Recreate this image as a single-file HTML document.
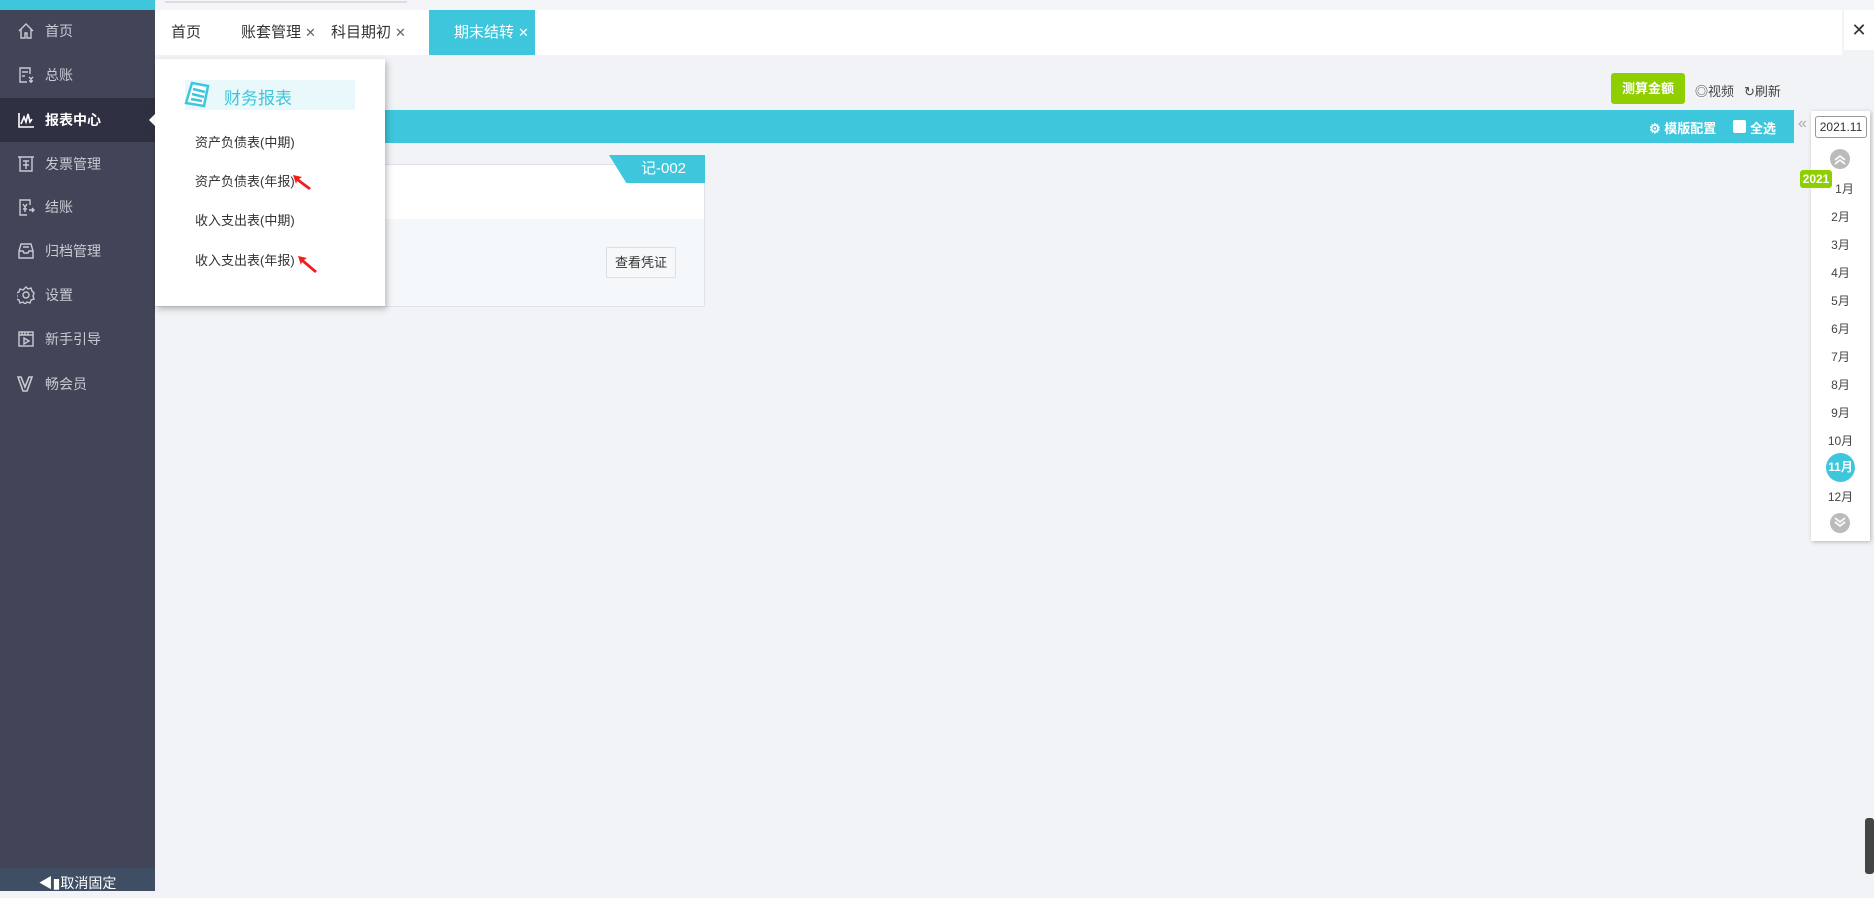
<!DOCTYPE html>
<html><head><meta charset="utf-8"><style>
*{margin:0;padding:0;box-sizing:border-box}
body{width:1874px;height:891px;overflow:hidden;background:#f1f3f6;font-family:"Liberation Sans","Noto Sans CJK SC",sans-serif;position:relative}
.abs{position:absolute}
#side{left:0;top:0;width:155px;height:891px;background:#424457}
#side .hd{height:10px;background:#3ec6dc}
.it{position:absolute;left:0;width:155px;height:44px;color:#c9cad3;font-size:14px;line-height:44px;padding-left:45px}
.it svg{position:absolute;left:17px;top:13px}
.it.on{background:#2f3143;color:#fff;font-weight:bold}
.tab{position:absolute;top:10px;height:45px;line-height:45px;font-size:15px;color:#333}
.x{font-size:13px;color:#666;margin-left:4px}
.mon{position:absolute;left:1811px;width:59px;text-align:center;font-size:12px;color:#444}
.pi{position:absolute;left:195px;font-size:13px;color:#333}
</style></head><body>
<div class="abs" style="left:155px;top:0;width:1719px;height:10px;background:#f3f5f8"></div>
<div class="abs" style="left:165px;top:1px;width:242px;height:2px;background:#ddd"></div>
<div id="side" class="abs"><div class="hd"></div>
<div class="it" style="top:9px"><svg width="18" height="18" viewBox="0 0 18 18" fill="none" stroke="#c9cad3" stroke-width="1.4"><path d="M2 9L9 2l7 7M4 7v9h4v-5h2v5h4V7"/></svg>首页</div>
<div class="it" style="top:53px"><svg width="18" height="18" viewBox="0 0 18 18" fill="none" stroke="#c9cad3" stroke-width="1.4"><path d="M13 8V2H3v14h7M5 6h6M5 10h3M12 11l2 2 2-2M14 13v4M12 15h4"/></svg>总账</div>
<div class="it on" style="top:98px"><svg width="18" height="18" viewBox="0 0 18 18" fill="none" stroke="#fff" stroke-width="1.6"><path d="M2 2v14h15M4 13l3-7 2 5 2-8 2 8 2-3"/></svg>报表中心</div>
<div class="abs" style="left:149px;top:114px;width:0;height:0;border-top:6px solid transparent;border-bottom:6px solid transparent;border-right:6px solid #fff"></div>
<div class="it" style="top:142px"><svg width="18" height="18" viewBox="0 0 18 18" fill="none" stroke="#c9cad3" stroke-width="1.4"><path d="M1 2h16M3 2v14h12V2M6 6h6M9 6v8M6 10h6"/></svg>发票管理</div>
<div class="it" style="top:185px"><svg width="18" height="18" viewBox="0 0 18 18" fill="none" stroke="#c9cad3" stroke-width="1.4"><path d="M13 7V2H3v15h7M6 6l2 3 2-3M8 9v5M6 11h4M12 12h5M15 10l2 2-2 2"/></svg>结账</div>
<div class="it" style="top:229px"><svg width="18" height="18" viewBox="0 0 18 18" fill="none" stroke="#c9cad3" stroke-width="1.4"><path d="M2 9l2-7h10l2 7v7H2zM2 9h4l1 2h4l1-2h4M6 5h6"/></svg>归档管理</div>
<div class="it" style="top:273px"><svg width="18" height="18" viewBox="0 0 18 18" fill="none" stroke="#c9cad3" stroke-width="1.4"><path d="M9 1l2 2 3-1 1 3 2 2-1 3 1 3-3 1-1 3-3-1-2 2-2-2-3 1-1-3-3-1 1-3-1-3 3-1 1-3 3 1z"/><circle cx="9" cy="9" r="3"/></svg>设置</div>
<div class="it" style="top:317px"><svg width="18" height="18" viewBox="0 0 18 18" fill="none" stroke="#c9cad3" stroke-width="1.4"><rect x="2" y="2" width="14" height="14"/><path d="M2 5h14M5 2v3M8 2v3M11 2v3M7 8v6l5-3z"/></svg>新手引导</div>
<div class="it" style="top:362px"><svg width="18" height="18" viewBox="0 0 18 18" fill="none" stroke="#c9cad3" stroke-width="1.6"><path d="M1 2l5 14h4l5-14h-3l-4 10-4-10z"/></svg>畅会员</div>
<div class="abs" style="left:0;top:868px;width:155px;height:23px;background:#3f4e63;color:#fff;font-size:14px;text-align:center;line-height:30px">◀▮取消固定</div>
</div>
<!-- tabs -->
<div class="abs" style="left:155px;top:10px;width:1687px;height:45px;background:#fff"></div>
<div class="abs" style="left:1844px;top:10px;width:30px;height:40px;background:#fff;font-size:18px;color:#333;text-align:center;line-height:40px">✕</div>
<div class="tab" style="left:171px">首页</div>
<div class="tab" style="left:241px">账套管理<span class="x">✕</span></div>
<div class="tab" style="left:331px">科目期初<span class="x">✕</span></div>
<div class="tab" style="left:429px;width:106px;background:#3ec6dc;color:#fff;padding-left:25px">期末结转<span class="x" style="color:#fff">✕</span></div>
<!-- toolbar -->
<div class="abs" style="left:1611px;top:73px;width:74px;height:31px;background:#8fcf00;border-radius:3px;color:#fff;font-size:13px;font-weight:bold;text-align:center;line-height:31px">测算金额</div>
<div class="abs" style="left:1695px;top:81px;font-size:13px;color:#444">◎视频</div>
<div class="abs" style="left:1744px;top:81px;font-size:13px;color:#444">↻刷新</div>
<div class="abs" style="left:155px;top:110px;width:1639px;height:33px;background:#3ec6dc"></div>
<div class="abs" style="left:1649px;top:118px;font-size:13px;color:#fff;font-weight:bold">⚙ 模版配置</div>
<div class="abs" style="left:1733px;top:120px;width:13px;height:13px;background:#fff;border-radius:2px"></div>
<div class="abs" style="left:1750px;top:118px;font-size:13px;color:#fff;font-weight:bold">全选</div>
<!-- card -->
<div class="abs" style="left:155px;top:164px;width:550px;height:143px;background:#f5f8fa;border:1px solid #dfe3e7"></div>
<div class="abs" style="left:156px;top:165px;width:548px;height:54px;background:#fff"></div>
<div class="abs" style="left:609px;top:155px;width:96px;height:28px;background:#3ec6dc;clip-path:polygon(0 0,100% 0,100% 100%,18% 100%);color:#fff;font-size:15px;line-height:28px;padding-left:32px">记-002</div>
<div class="abs" style="left:606px;top:247px;width:70px;height:31px;background:#f7f8f9;border:1px solid #dcdfe3;border-radius:2px;font-size:13px;color:#333;text-align:center;line-height:29px">查看凭证</div>
<!-- popup -->
<div class="abs" style="left:155px;top:59px;width:230px;height:247px;background:#fff;box-shadow:2px 3px 6px rgba(0,0,0,.25)"></div>
<div class="abs" style="left:185px;top:80px;width:170px;height:30px;background:#e8f8fb"></div>
<svg class="abs" style="left:184px;top:79px" width="32" height="32" viewBox="0 0 32 32" fill="none" stroke="#3ec6dc" stroke-width="2.5"><path d="M8 4l16 3-4 20L2 24z" fill="#fff"/><path d="M9 10l12 3M8 15l12 3M7 20l11 2"/></svg>
<div class="abs" style="left:224px;top:84px;font-size:17px;color:#3ec6dc">财务报表</div>
<div class="pi" style="top:132px">资产负债表(中期)</div>
<div class="pi" style="top:171px">资产负债表(年报)</div>
<div class="pi" style="top:210px">收入支出表(中期)</div>
<div class="pi" style="top:250px">收入支出表(年报)</div>
<svg class="abs" style="left:290px;top:172px" width="30" height="20"><path d="M3 3l9 2-3 2 12 9-2 2-12-9-1 3z" fill="#f01e1e"/></svg>
<svg class="abs" style="left:296px;top:254px" width="30" height="22"><path d="M2 2l9 2-3 2 13 11-2 2-13-11-1 3z" fill="#f01e1e"/></svg>
<!-- right panel -->
<div class="abs" style="left:1794px;top:111px;width:17px;height:33px;background:#f1f3f6;color:#aaa;font-size:16px;text-align:center;line-height:26px">«</div>
<div class="abs" style="left:1811px;top:111px;width:59px;height:430px;background:#fff;box-shadow:1px 1px 4px rgba(0,0,0,.25)"></div>
<div class="abs" style="left:1815px;top:116px;width:52px;height:22px;border:1px solid #999;border-radius:3px;font-size:12px;color:#333;text-align:center;line-height:20px">2021.11</div>
<svg class="abs" style="left:1830px;top:149px" width="20" height="20" viewBox="0 0 20 20"><circle cx="10" cy="10" r="10" fill="#bbb"/><path d="M5 11l5-4 5 4M5 15l5-4 5 4" stroke="#fff" stroke-width="1.6" fill="none"/></svg>
<div class="abs" style="left:1800px;top:170px;width:32px;height:18px;background:#8fcf00;border-radius:3px;color:#fff;font-size:12px;font-weight:bold;text-align:center;line-height:18px">2021</div>
<div class="mon" style="top:180px;padding-left:8px">1月</div>
<div class="mon" style="top:208px">2月</div>
<div class="mon" style="top:236px">3月</div>
<div class="mon" style="top:264px">4月</div>
<div class="mon" style="top:292px">5月</div>
<div class="mon" style="top:320px">6月</div>
<div class="mon" style="top:348px">7月</div>
<div class="mon" style="top:376px">8月</div>
<div class="mon" style="top:404px">9月</div>
<div class="mon" style="top:432px">10月</div>
<div class="abs" style="left:1826px;top:453px;width:29px;height:29px;border-radius:50%;background:#3ec6dc;color:#fff;font-size:12px;font-weight:bold;text-align:center;line-height:29px">11月</div>
<div class="mon" style="top:488px">12月</div>
<svg class="abs" style="left:1830px;top:513px" width="20" height="20" viewBox="0 0 20 20"><circle cx="10" cy="10" r="10" fill="#bbb"/><path d="M5 5l5 4 5-4M5 9l5 4 5-4" stroke="#fff" stroke-width="1.6" fill="none"/></svg>
<div class="abs" style="left:1865px;top:818px;width:9px;height:56px;background:#444;border-radius:3px"></div>
</body></html>
